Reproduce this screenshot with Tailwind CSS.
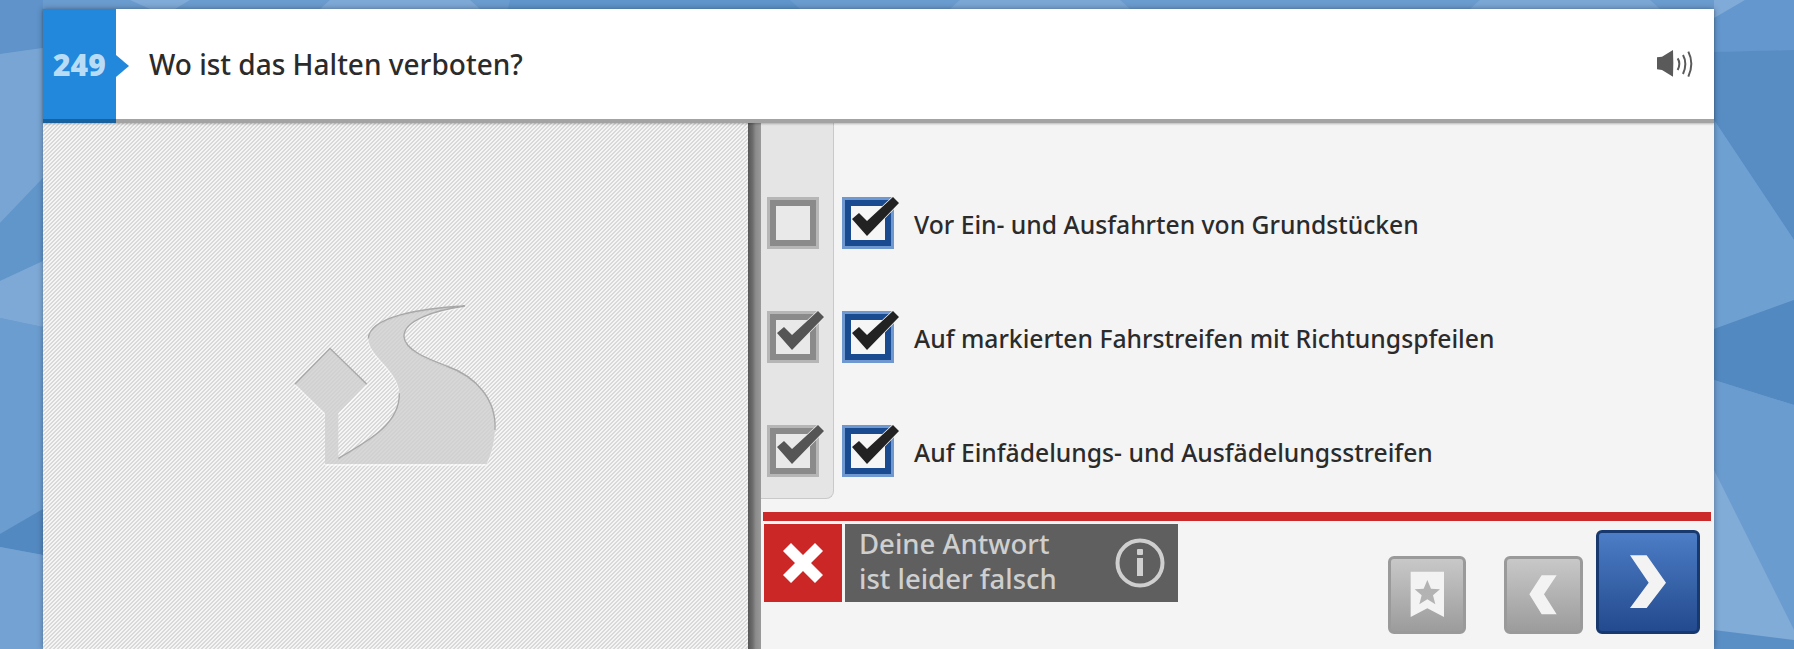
<!DOCTYPE html>
<html lang="de">
<head>
  <meta charset="UTF-8" />
  <title>Wo ist das Halten verboten?</title>
  <script src="https://cdn.jsdelivr.net/npm/@tailwindcss/browser@4"></script>
</head>
<body class="relative h-[649px] overflow-hidden bg-[#6a9bcf] font-['Noto_Sans',sans-serif]">

  <!-- backdrop -->
  <svg class="absolute inset-0" width="1794" height="649" viewBox="0 0 1794 649">
    <rect width="1794" height="649" fill="#6b9ccf" />
    <polygon points="0,0 43,0 43,48 0,54" fill="#5f93c9" />
    <polygon points="0,54 43,48 43,178 0,223" fill="#78a5d4" />
    <polygon points="0,223 43,178 43,261 0,281" fill="#6196cb" />
    <polygon points="0,281 43,261 43,327 0,318" fill="#7ea9d6" />
    <polygon points="0,318 43,327 43,509 0,534" fill="#6c9dd0" />
    <polygon points="0,534 43,509 43,555 0,547" fill="#5389c1" />
    <polygon points="0,547 43,555 43,649 0,649" fill="#74a2d3" />
    <polygon points="1714,0 1794,0 1794,50 1714,52" fill="#6397cd" />
    <polygon points="1714,0 1745,0 1714,18" fill="#80aad7" />
    <polygon points="1714,52 1794,50 1794,240 1714,120" fill="#588dc4" />
    <polygon points="1714,120 1794,240 1794,300 1714,329" fill="#6fa0d2" />
    <polygon points="1714,329 1794,300 1794,405 1714,380" fill="#5289c1" />
    <polygon points="1714,380 1794,405 1794,649 1714,470" fill="#6b9ccf" />
    <polygon points="1714,470 1794,630 1794,649 1714,649" fill="#82acd8" />
    <polygon points="1714,630 1794,640 1794,649 1714,649" fill="#5a8fc6" />
    <polygon points="130,0 150,9 175,9 190,0" fill="#80aad7" />
    <polygon points="330,0 320,9 480,9 470,0" fill="#7ea9d6" />
    <polygon points="510,0 508,9 800,9 790,0" fill="#5f95ca" />
    <polygon points="960,0 950,9 1130,9 1120,0" fill="#7ba7d5" />
    <polygon points="1480,0 1470,9 1660,9 1650,0" fill="#7ba7d5" />
  </svg>

  <main class="relative ml-[43px] pt-[9px] w-[1671px]">
    <div class="flex flex-col h-[640px] shadow-[0_0_6px_rgba(0,0,0,0.35)]">

      <!-- question -->
      <header class="relative z-10 flex h-[114px] shrink-0 bg-white border-b-[4px] border-[#a3a3a3] shadow-[0_1px_2px_rgba(0,0,0,0.25)]">
        <div class="relative w-[73px] h-[114px] shrink-0 flex items-center pl-[10px] bg-[#2188dc] border-b-[4px] border-[#19609f]">
          <span class="text-[30px] font-extrabold text-[#b9dcf6] font-['Open_Sans',sans-serif]">249</span>
          <span class="absolute left-full top-[46px] border-y-[11px] border-y-transparent border-l-[13px] border-l-[#2188dc]"></span>
        </div>
        <h1 class="ml-[33px] self-center text-[28px] font-medium text-[#2b2b2b]">Wo ist das Halten verboten?</h1>
        <svg class="ml-auto mr-[19px] self-center" width="38" height="28" viewBox="0 0 114 84">
          <path d="M0 22 L15 20 L48 0 Q50 40 48 80 L15 60 L0 58 Z" fill="#5a5a5a" />
          <path d="M62 25 Q72 40 62 60 M78 15 Q92 40 78 72 M94 5 Q112 40 94 80" fill="none" stroke="#5a5a5a" stroke-width="6" />
        </svg>
      </header>

      <div class="flex flex-1 min-h-0">
        <!-- picture pane -->
        <section class="w-[705px] shrink-0 flex justify-center pt-[157px] pr-[12px] bg-[repeating-linear-gradient(135deg,#d9d9d9_0,#d9d9d9_1.414px,#f5f5f5_1.414px,#f5f5f5_2.828px)]">
          <svg width="240" height="200" viewBox="0 0 720 600">
            <path transform="translate(0 6)" fill="#ffffff" fill-opacity="0.5" d="M75 312 L180 205 L290 312 L205 400 L205 535 C300 480 390 430 388 340 C385 270 295 230 295 175 C300 110 450 85 585 78 C500 90 400 120 402 170 C405 210 470 235 530 258 C620 290 680 360 675 450 C672 500 660 530 650 552 L165 552 L165 400 Z" />
            <path fill="#c0c0c0" fill-opacity="0.6" d="M75 312 L180 205 L290 312 L205 400 L205 535 C300 480 390 430 388 340 C385 270 295 230 295 175 C300 110 450 85 585 78 C500 90 400 120 402 170 C405 210 470 235 530 258 C620 290 680 360 675 450 C672 500 660 530 650 552 L165 552 L165 400 Z" />
            <path fill="none" stroke="#a8a8a8" stroke-width="4" d="M75 312 L180 205 L290 312 M205 535 C300 480 390 430 388 340 M295 175 C300 110 450 85 585 78 C500 90 400 120 402 170 C405 210 470 235 530 258 C620 290 680 360 675 450" />
          </svg>
        </section>

        <div class="w-[13px] shrink-0 bg-[linear-gradient(90deg,#555_0,#6d6d6d_35%,#8c8c8c_60%,#9a9a9a_100%)]"></div>

        <!-- answers -->
        <section class="flex-1 min-w-0 flex flex-col bg-[#f4f4f4]">
          <div class="flex h-[376px] shrink-0">
            <div class="w-[73px] shrink-0 pt-[74px] pl-[6px] flex flex-col gap-[62px] bg-[#e5e5e5] border-r border-b border-[#c9c9c9] rounded-br-lg">
              <svg class="overflow-visible shrink-0" width="52" height="52" viewBox="0 0 52 52">
                <rect x="0" y="0" width="52" height="52" fill="#b6b6b6" />
                <rect x="3" y="3" width="46" height="46" fill="#8a8a8a" />
                <rect x="9" y="9" width="34" height="34" fill="#e9e9e9" />
              </svg>
              <svg class="overflow-visible shrink-0" width="52" height="52" viewBox="0 0 52 52">
                <rect x="0" y="0" width="52" height="52" fill="#b6b6b6" />
                <rect x="3" y="3" width="46" height="46" fill="#8a8a8a" />
                <rect x="9" y="9" width="34" height="34" fill="#e9e9e9" />
                <polygon points="10,22 17,16 25,24 51,0 57,6 25,39" fill="#555555" stroke="#e9e9e9" stroke-width="1.5" paint-order="stroke" />
              </svg>
              <svg class="overflow-visible shrink-0" width="52" height="52" viewBox="0 0 52 52">
                <rect x="0" y="0" width="52" height="52" fill="#b6b6b6" />
                <rect x="3" y="3" width="46" height="46" fill="#8a8a8a" />
                <rect x="9" y="9" width="34" height="34" fill="#e9e9e9" />
                <polygon points="10,22 17,16 25,24 51,0 57,6 25,39" fill="#555555" stroke="#e9e9e9" stroke-width="1.5" paint-order="stroke" />
              </svg>
            </div>

            <ul class="flex-1 pt-[74px] pl-[8px] flex flex-col gap-[62px] text-[24.7px] font-medium text-[#2b2b2b]">
              <li class="h-[52px] flex items-center gap-[20px]">
                <svg class="overflow-visible shrink-0" width="52" height="52" viewBox="0 0 52 52">
                  <rect x="0" y="0" width="52" height="52" fill="#6f98d0" />
                  <rect x="3" y="3" width="46" height="46" fill="#1a4a90" />
                  <rect x="9" y="9" width="34" height="34" fill="#f6f6f6" />
                  <polygon points="10,22 17,16 25,24 51,0 57,6 25,39" fill="#222222" stroke="#f3f3f3" stroke-width="1.5" paint-order="stroke" />
                </svg>
                <span class="mt-[3px]">Vor Ein- und Ausfahrten von Grundstücken</span>
              </li>
              <li class="h-[52px] flex items-center gap-[20px]">
                <svg class="overflow-visible shrink-0" width="52" height="52" viewBox="0 0 52 52">
                  <rect x="0" y="0" width="52" height="52" fill="#6f98d0" />
                  <rect x="3" y="3" width="46" height="46" fill="#1a4a90" />
                  <rect x="9" y="9" width="34" height="34" fill="#f6f6f6" />
                  <polygon points="10,22 17,16 25,24 51,0 57,6 25,39" fill="#222222" stroke="#f3f3f3" stroke-width="1.5" paint-order="stroke" />
                </svg>
                <span class="mt-[3px]">Auf markierten Fahrstreifen mit Richtungspfeilen</span>
              </li>
              <li class="h-[52px] flex items-center gap-[20px]">
                <svg class="overflow-visible shrink-0" width="52" height="52" viewBox="0 0 52 52">
                  <rect x="0" y="0" width="52" height="52" fill="#6f98d0" />
                  <rect x="3" y="3" width="46" height="46" fill="#1a4a90" />
                  <rect x="9" y="9" width="34" height="34" fill="#f6f6f6" />
                  <polygon points="10,22 17,16 25,24 51,0 57,6 25,39" fill="#222222" stroke="#f3f3f3" stroke-width="1.5" paint-order="stroke" />
                </svg>
                <span class="mt-[3px]">Auf Einfädelungs- und Ausfädelungsstreifen</span>
              </li>
            </ul>
          </div>

          <div class="h-[9px] mt-[13px] ml-[2px] mr-[3px] bg-[#cc2a2a]"></div>

          <div class="flex items-start mt-[3px] pl-[3px] pr-[14px]">
            <div class="w-[78px] h-[78px] shrink-0 flex items-center justify-center bg-[#cc2727]">
              <svg width="40" height="40" viewBox="0 0 40 40">
                <polygon points="8,0 20,12 32,0 40,8 28,20 40,32 32,40 20,28 8,40 0,32 12,20 0,8" fill="#ffffff" />
              </svg>
            </div>
            <div class="ml-[3px] w-[333px] h-[78px] shrink-0 flex items-center justify-between pl-[14px] pr-[13px] bg-[#5f5f5f] text-[#cfcfcf]">
              <p class="mb-[4px] text-[27.5px] font-medium leading-[35px]">Deine Antwort<br />ist leider falsch</p>
              <svg width="50" height="50" viewBox="0 0 50 50">
                <circle cx="25" cy="25" r="22.5" fill="none" stroke="#cfcfcf" stroke-width="4" />
                <rect x="22" y="11" width="6" height="6" rx="1" fill="#cfcfcf" />
                <rect x="22" y="20" width="6" height="18" fill="#cfcfcf" />
              </svg>
            </div>

            <div class="ml-auto flex items-end mt-[6px]">
              <button class="w-[78px] h-[78px] flex items-center justify-center rounded-md border-[3px] border-[#9a9a9a] bg-[linear-gradient(180deg,#c8c8c8,#9c9c9c)]">
                <svg width="78" height="78" viewBox="0 0 234 234" class="shrink-0">
                  <polygon points="68,47 168,47 168,183 118,157 68,183" fill="#f3f3f3" />
                  <polygon points="118,72 129,98 156,100 135,118 142,145 118,130 94,145 101,118 80,100 107,98" fill="#b3b3b3" />
                </svg>
              </button>
              <button class="ml-[38px] w-[79px] h-[78px] flex items-center justify-center rounded-md border-[3px] border-[#9a9a9a] bg-[linear-gradient(180deg,#c8c8c8,#9c9c9c)]">
                <svg width="78" height="78" viewBox="0 0 234 234" class="shrink-0">
                  <polygon points="155,58 110,58 73,115 110,175 155,175 117,115" fill="#f3f3f3" />
                </svg>
              </button>
              <button class="ml-[13px] w-[104px] h-[104px] flex items-center justify-center rounded-md border-[3px] border-[#17396f] bg-[linear-gradient(180deg,#4c7dc6,#234a8e)]">
                <svg width="104" height="104" viewBox="0 0 312 312" class="shrink-0">
                  <polygon points="102,76 152,76 210,158 152,234 102,234 158,158" fill="#f3f3f3" />
                </svg>
              </button>
            </div>
          </div>
        </section>
      </div>
    </div>
  </main>
</body>
</html>
